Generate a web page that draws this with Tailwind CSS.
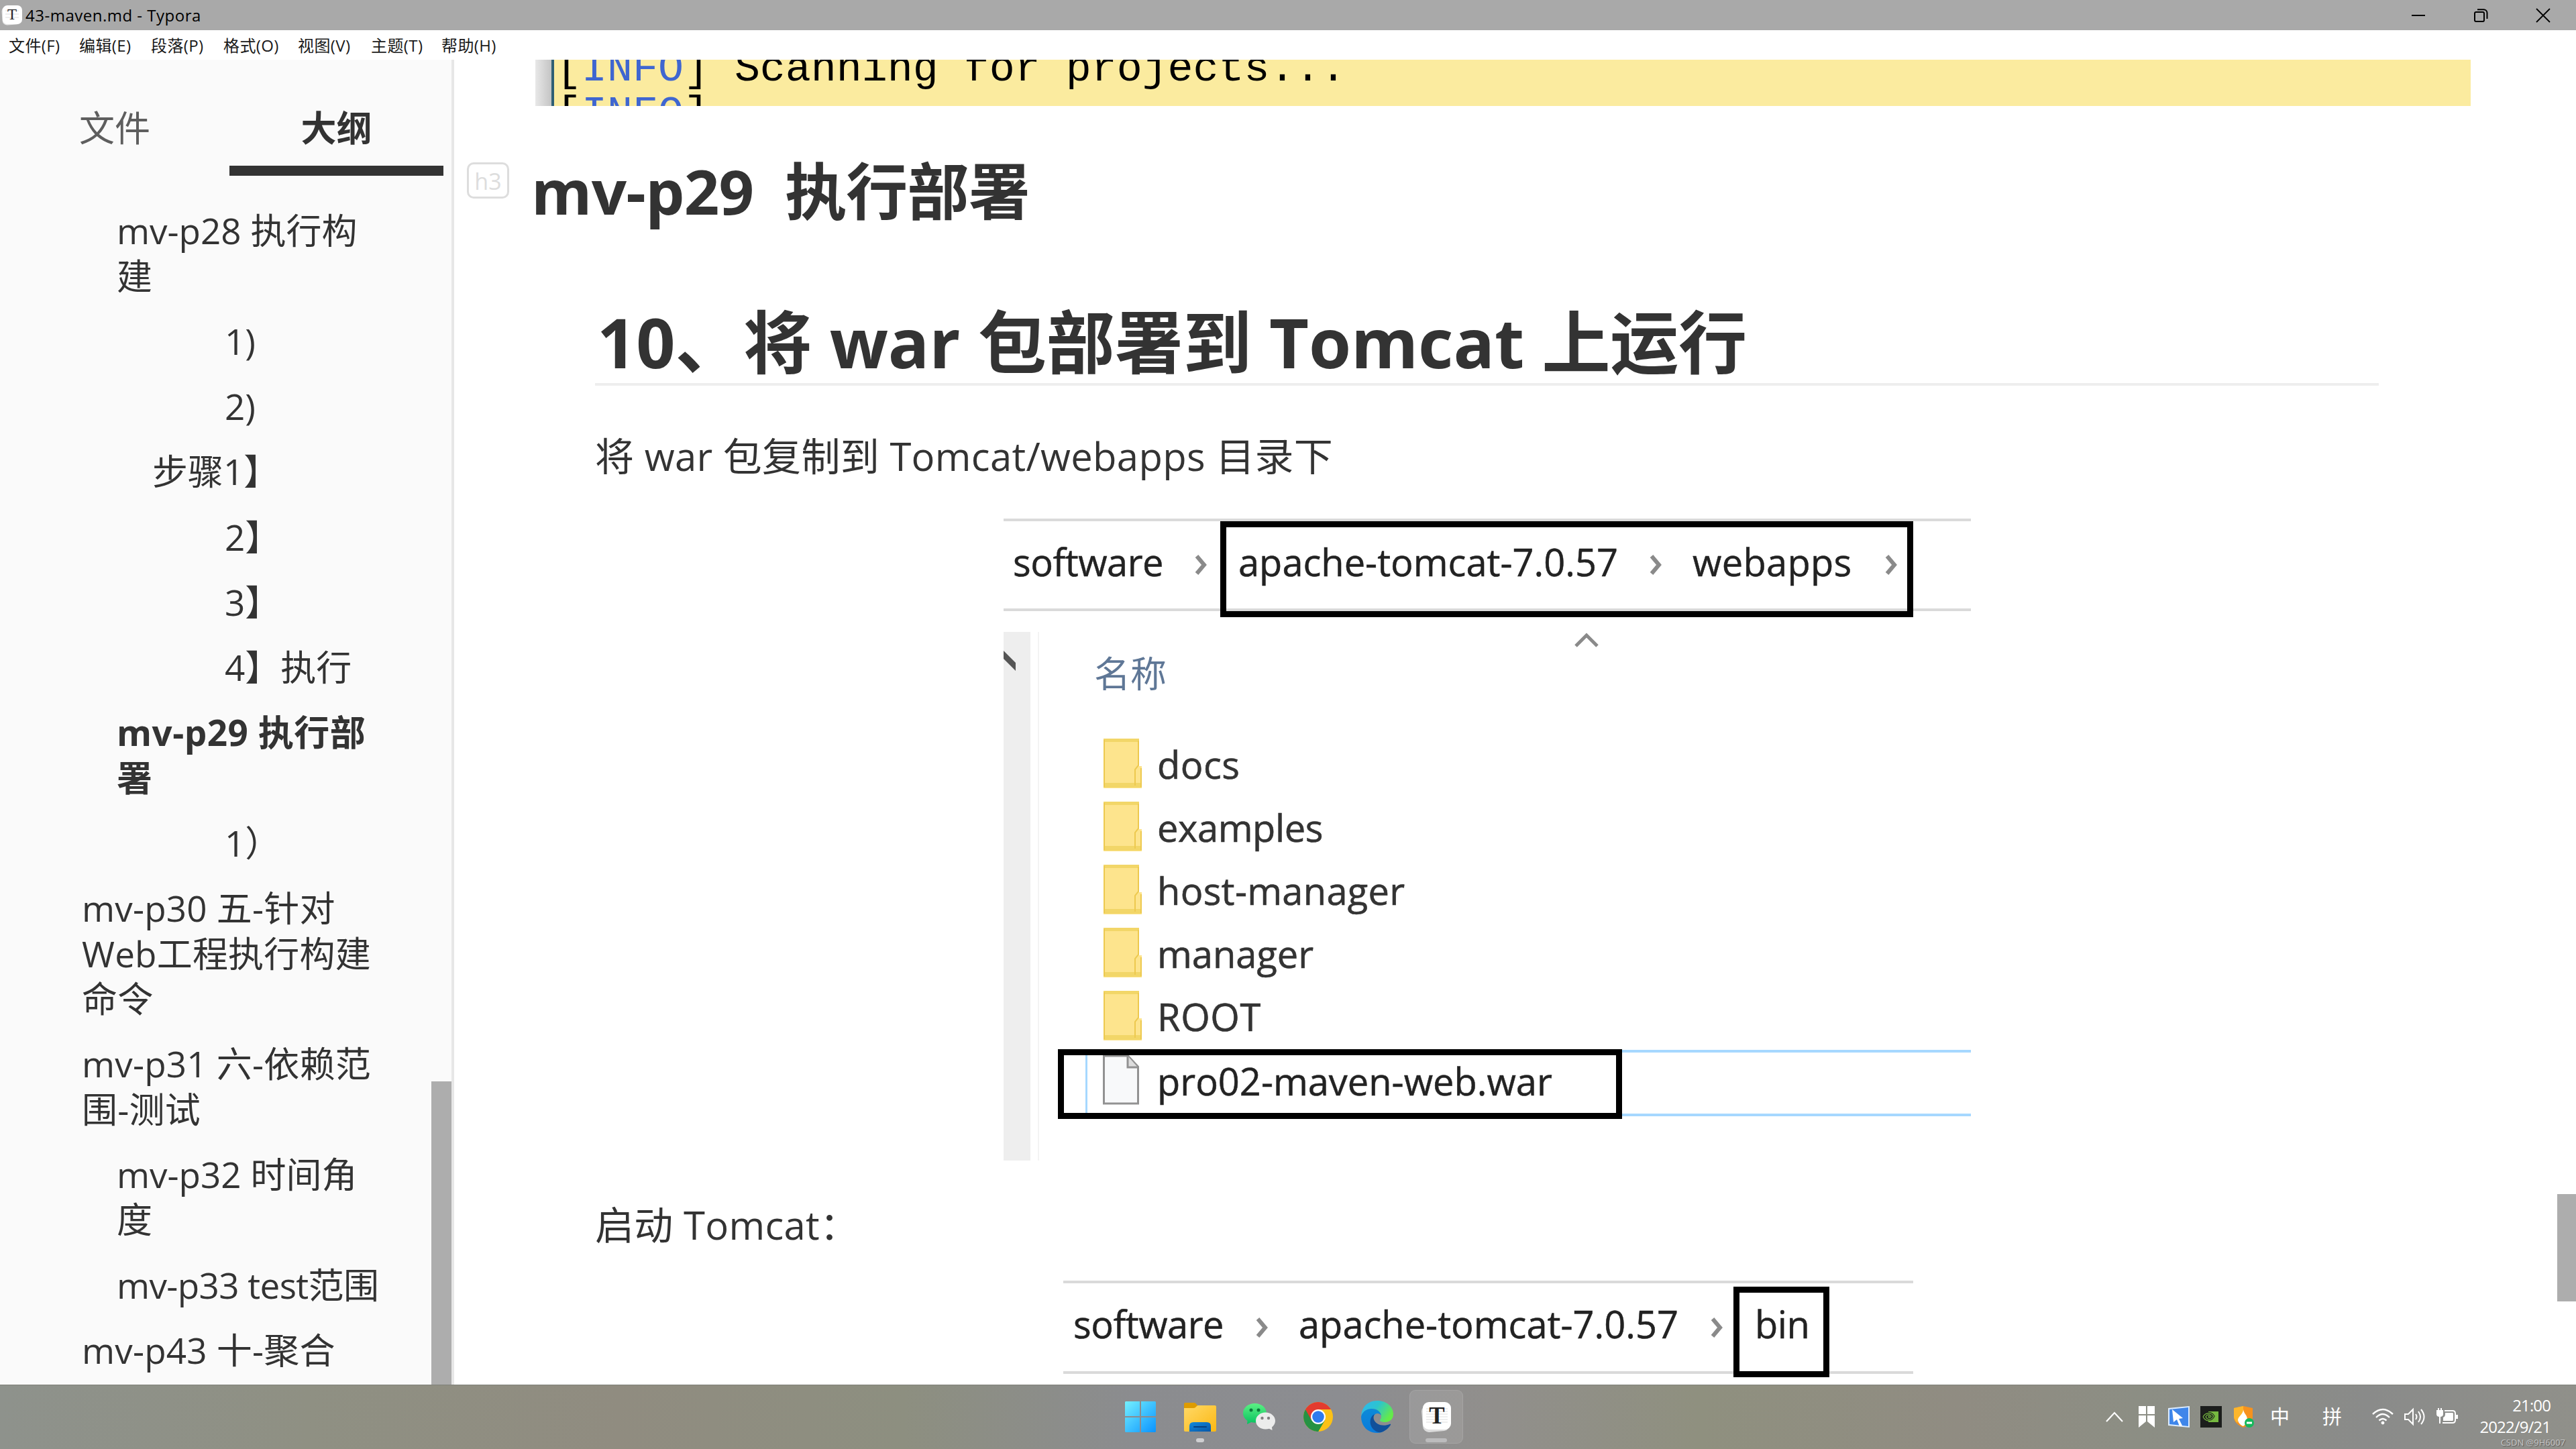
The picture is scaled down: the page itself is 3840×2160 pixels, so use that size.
<!DOCTYPE html>
<html lang="zh-CN">

<head>
  <meta charset="UTF-8" />
  <meta name="viewport" content="width=device-width, initial-scale=1.0" />
  <title>43-maven.md - Typora</title>
  <script src="https://cdn.jsdelivr.net/npm/@tailwindcss/browser@4"></script>
</head>

<body class="w-[3840px] h-[2160px] overflow-hidden flex flex-col bg-white text-[#333] font-['Open_Sans','Noto_Sans_CJK_SC',sans-serif]">

  <!-- Title bar -->
  <header class="h-[45px] shrink-0 bg-[#a9a9a9] text-black flex items-center">
    <svg class="w-[32px] h-[32px] ml-[2px]" viewBox="0 0 32 32">
      <rect x="1" y="2" width="27" height="28" rx="7" fill="#e4e4e4" transform="rotate(-4 16 16)" />
      <rect x="2" y="1" width="29" height="28" rx="7" fill="#fff" />
      <path d="M6 9h20M6 14h20M6 19h20" stroke="#ddd" />
      <text x="16" y="22" text-anchor="middle" font-family="Liberation Serif" font-size="23" fill="#222">T</text>
    </svg>
    <span class="ml-[4px] text-[24px] leading-[45px] tracking-[0.5px]">43-maven.md - Typora</span>
    <div class="ml-auto flex items-center pr-[37px] gap-[69px] h-[42px]">
      <svg class="w-[24px] h-[24px]" viewBox="0 0 24 24" fill="none" stroke="#000" stroke-width="2"><path d="M2 12h20" /></svg>
      <svg class="w-[24px] h-[24px]" viewBox="0 0 24 24" fill="none" stroke="#000" stroke-width="2">
        <rect x="3" y="7" width="14" height="14" rx="2" />
        <path d="M7 3.2h9.500a5 5 0 0 1 5 5V17" />
      </svg>
      <svg class="w-[24px] h-[24px]" viewBox="0 0 24 24" fill="none" stroke="#000" stroke-width="1.800"><path d="M2 2l20 20M22 2L2 22" /></svg>
    </div>
  </header>

  <!-- Menu bar -->
  <nav class="h-[44px] shrink-0 flex items-center pl-[13px] text-[24px] leading-[45px] tracking-[0.4px] text-[#1a1a1a]">
    <span class="w-[105px]">文件(F)</span>
    <span class="w-[107px]">编辑(E)</span>
    <span class="w-[108px]">段落(P)</span>
    <span class="w-[111px]">格式(O)</span>
    <span class="w-[109px]">视图(V)</span>
    <span class="w-[105px]">主题(T)</span>
    <span>帮助(H)</span>
  </nav>

  <div class="h-[1975px] shrink-0 flex overflow-hidden">

    <!-- Outline sidebar -->
    <aside class="relative w-[677px] shrink-0 bg-[#fafafa] border-r-4 border-[#e7e7e7] overflow-hidden text-[53px] leading-[67.5px]">
      <div class="flex h-[173px] text-center leading-[203px]">
        <div class="w-[342px] text-[#5e5e5e]">文件</div>
        <div class="w-[319px] font-bold border-b-[15px] border-[#333]">大纲</div>
      </div>
      <ul class="pt-[33.5px] pl-px">
        <li class="py-[14.85px] pl-[173px]">mv-p28 执行构<br />建</li>
        <li class="py-[14.85px] pl-[334px]">1)</li>
        <li class="py-[14.85px] pl-[334px]">2)</li>
        <li class="py-[14.85px] pl-[226px]">步骤1】</li>
        <li class="py-[14.85px] pl-[334px]">2】</li>
        <li class="py-[14.85px] pl-[334px]">3】</li>
        <li class="py-[14.85px] pl-[334px]">4】执行</li>
        <li class="py-[14.85px] pl-[173px] font-bold tracking-[0.5px]">mv-p29 执行部<br />署</li>
        <li class="py-[14.85px] pl-[334px]">1）</li>
        <li class="py-[14.85px] pl-[121px] tracking-[0.2px]">mv-p30 五-针对<br />Web工程执行构建<br />命令</li>
        <li class="py-[14.85px] pl-[121px] tracking-[0.2px]">mv-p31 六-依赖范<br />围-测试</li>
        <li class="py-[14.85px] pl-[173px]">mv-p32 时间角<br />度</li>
        <li class="py-[14.85px] pl-[173px] tracking-[-0.6px]">mv-p33 test范围</li>
        <li class="py-[14.85px] pl-[121px] tracking-[0.2px]">mv-p43 十-聚合</li>
      </ul>
      <div class="absolute right-0 bottom-0 w-[30px] h-[452px] bg-[#adadad]"></div>
    </aside>

    <!-- Document -->
    <main class="relative flex-1 overflow-hidden">
      <div class="ml-[121px] w-[2885px] h-[69px] flex overflow-hidden bg-[#fbeb9f] text-black font-['Liberation_Mono',monospace] text-[63.3px]">
        <div class="w-[24px] shrink-0 bg-gradient-to-r from-[#e8e8e8] to-[#c4c4c4]"></div>
        <div class="w-[4px] shrink-0 bg-[#2f5f74]"></div>
        <div class="pl-[3px] leading-[67px] -mt-[19px]">
          <p>[<span class="text-[#3f66d0]">INFO</span>] Scanning for projects...</p>
          <p>[<span class="text-[#3f66d0]">INFO</span>]</p>
        </div>
      </div>

      <div class="mt-[75px] pl-[19px] flex h-[100px]">
        <span class="mt-[9px] w-[63px] h-[54px] border-3 border-[#ddd] rounded-[10px] text-[#ddd] text-[34px] leading-[50px] text-center">h3</span>
        <h3 class="ml-[33px] text-[92px] leading-[103px] font-bold whitespace-pre tracking-[-0.7px]">mv-p29  执行部署</h3>
      </div>

      <h2 class="mt-[112px] ml-[210px] pl-[3px] w-[2659px] h-[130px] border-b-4 border-[#eee] text-[102px] leading-[129px] tracking-[-0.1px] font-bold">10、将 war 包部署到 Tomcat 上运行</h2>

      <p class="mt-[63px] ml-[210px] h-[80px] text-[58px] leading-[83px] tracking-[0.3px] text-[#333]">将 war 包复制到 Tomcat/webapps 目录下</p>

      <!-- Explorer: webapps -->
      <div class="relative mt-[55px] ml-[819px] w-[1442px]">
        <div class="h-[138px] border-y-4 border-[#dadada] pl-[14px] grid grid-cols-[270px_66px_612px_65px_286px_20px] text-[56px] leading-[120px] text-[#222] [-webkit-text-stroke:0.5px_#222]">
          <span class="tracking-[-0.5px]">software</span>
          <svg class="w-[20px] h-[30px] mt-[50px]" viewBox="0 0 20 30" fill="none" stroke="#8a8a8a" stroke-width="6"><path d="M4 2l11 13L4 28" /></svg>
          <span>apache-tomcat-7.0.57</span>
          <svg class="w-[20px] h-[30px] mt-[50px]" viewBox="0 0 20 30" fill="none" stroke="#8a8a8a" stroke-width="6"><path d="M4 2l11 13L4 28" /></svg>
          <span class="tracking-[0.3px]">webapps</span>
          <svg class="w-[20px] h-[30px] mt-[50px]" viewBox="0 0 20 30" fill="none" stroke="#8a8a8a" stroke-width="6"><path d="M4 2l11 13L4 28" /></svg>
        </div>
        <div class="absolute left-[323px] top-[4px] w-[1033px] h-[143px] border-[9px] border-black"></div>

        <div class="mt-[31px] h-[788px] flex">
          <div class="w-[40px] bg-[#eee]">
            <svg class="w-[18px] h-[30px] mt-[28px]" viewBox="0 0 18 30"><path d="M0 0l18 18v12L0 12z" fill="#555" /></svg>
          </div>
          <div class="relative ml-[11px] flex-1 border-l-2 border-[#f4f4f4]">
            <div class="h-[150px] flex">
              <span class="w-[714px] pl-[82px] text-[54px] leading-[124px] text-[#5f7796]">名称</span>
              <svg class="ml-[83px] w-[38px] h-[24px]" viewBox="0 0 38 24" fill="none" stroke="#8a8a8a" stroke-width="5"><path d="M3 21L19 5l16 16" /></svg>
            </div>
            <ul class="text-[56px] leading-[94px] text-[#333] [-webkit-text-stroke:0.6px_#333]">
              <li class="h-[94px] pl-[95px] flex tracking-[0.5px]">
                <svg class="w-[58px] h-[75px] mt-[8px] mr-[23px]" viewBox="0 0 58 75"><path d="M1 2h53v40h4v33H1z" fill="#fde48d" /><path d="M1 1h53v5H1zM1 67h57v7H1z" fill="#f2d668" /><path d="M2 3v70M53 4v37l-5 6v24M57 45v28" stroke="#edc94f" stroke-width="2" fill="none" /></svg>docs
              </li>
              <li class="h-[94px] pl-[95px] flex tracking-[-0.4px]">
                <svg class="w-[58px] h-[75px] mt-[8px] mr-[23px]" viewBox="0 0 58 75"><path d="M1 2h53v40h4v33H1z" fill="#fde48d" /><path d="M1 1h53v5H1zM1 67h57v7H1z" fill="#f2d668" /><path d="M2 3v70M53 4v37l-5 6v24M57 45v28" stroke="#edc94f" stroke-width="2" fill="none" /></svg>examples
              </li>
              <li class="h-[94px] pl-[95px] flex tracking-[0.3px]">
                <svg class="w-[58px] h-[75px] mt-[8px] mr-[23px]" viewBox="0 0 58 75"><path d="M1 2h53v40h4v33H1z" fill="#fde48d" /><path d="M1 1h53v5H1zM1 67h57v7H1z" fill="#f2d668" /><path d="M2 3v70M53 4v37l-5 6v24M57 45v28" stroke="#edc94f" stroke-width="2" fill="none" /></svg>host-manager
              </li>
              <li class="h-[94px] pl-[95px] flex">
                <svg class="w-[58px] h-[75px] mt-[8px] mr-[23px]" viewBox="0 0 58 75"><path d="M1 2h53v40h4v33H1z" fill="#fde48d" /><path d="M1 1h53v5H1zM1 67h57v7H1z" fill="#f2d668" /><path d="M2 3v70M53 4v37l-5 6v24M57 45v28" stroke="#edc94f" stroke-width="2" fill="none" /></svg>manager
              </li>
              <li class="h-[94px] pl-[95px] flex tracking-[0.6px]">
                <svg class="w-[58px] h-[75px] mt-[8px] mr-[23px]" viewBox="0 0 58 75"><path d="M1 2h53v40h4v33H1z" fill="#fde48d" /><path d="M1 1h53v5H1zM1 67h57v7H1z" fill="#f2d668" /><path d="M2 3v70M53 4v37l-5 6v24M57 45v28" stroke="#edc94f" stroke-width="2" fill="none" /></svg>ROOT
              </li>
              <li class="mt-[3px] ml-[69px] h-[99px] border-y-4 border-l-3 border-[#a6d8ff] pl-[23px] flex leading-[85px] text-[#222]">
                <svg class="w-[54px] h-[75px] mt-[3px] mr-[27px]" viewBox="0 0 54 75"><path d="M1.500 2h36l15 16v55h-51z" fill="#f8f9fa" stroke="#929292" stroke-width="3" /><path d="M37 2v17h15" fill="#ddd" stroke="#929292" stroke-width="3" /></svg>pro02-maven-web.war
              </li>
            </ul>
            <div class="absolute left-[28px] top-[622px] w-[841px] h-[104px] border-[9px] border-black"></div>
          </div>
        </div>
      </div>

      <p class="mt-[54px] ml-[210px] h-[80px] text-[58px] leading-[83px] tracking-[0.3px] text-[#333]">启动 Tomcat：</p>

      <!-- Explorer: bin -->
      <div class="relative mt-[45px] ml-[908px] w-[1267px]">
        <div class="h-[139px] border-y-4 border-[#dadada] pl-[14px] grid grid-cols-[272px_65px_613px_67px_auto] text-[56px] leading-[121px] text-[#222] [-webkit-text-stroke:0.5px_#222]">
          <span class="tracking-[-0.5px] pl-px">software</span>
          <svg class="w-[20px] h-[30px] mt-[51px]" viewBox="0 0 20 30" fill="none" stroke="#8a8a8a" stroke-width="6"><path d="M4 2l11 13L4 28" /></svg>
          <span>apache-tomcat-7.0.57</span>
          <svg class="w-[20px] h-[30px] mt-[51px]" viewBox="0 0 20 30" fill="none" stroke="#8a8a8a" stroke-width="6"><path d="M4 2l11 13L4 28" /></svg>
          <span class="tracking-[-0.5px]">bin</span>
        </div>
        <div class="absolute left-[999px] top-[9px] w-[143px] h-[135px] border-[9px] border-black"></div>
      </div>

      <div class="absolute right-0 top-[1691px] w-[28px] h-[160px] bg-[#adadad]"></div>
    </main>
  </div>

  <!-- Taskbar -->
  <footer class="relative h-[96px] shrink-0 flex items-center border-t border-[#7f8078] text-white bg-linear-[90deg,#8e928c_0%,#8f9083_12%,#908c80_24%,#8d8f80_35%,#8b8c8f_44%,#8c8d91_52%,#918f8c_58%,#8f907f_66%,#908c82_76%,#8c8e84_83%,#8a8b8a_92%,#90908a_100%]">
    <div class="ml-[1656px] -mt-px flex items-center">
      <div class="w-[88px] h-[80px] flex items-center justify-center">
        <svg class="w-[46px] h-[46px]" viewBox="0 0 46 46">
          <defs><linearGradient id="win" x1="0" y1="0" x2="1" y2="1"><stop offset="0" stop-color="#74f0ff" /><stop offset="1" stop-color="#0a93ff" /></linearGradient></defs>
          <path d="M1 0h21v22H0V1zM24 0h21l1 1v21H24zM0 24h22v22H1l-1-1zM24 24h22v21l-1 1H24z" fill="url(#win)" />
        </svg>
      </div>
      <div class="relative w-[88px] h-[80px] pl-[2px] flex items-center justify-center">
        <svg class="w-[48px] h-[44px]" viewBox="0 0 48 44">
          <defs>
            <linearGradient id="fold" x1="0" y1="0" x2="1" y2="1"><stop offset="0" stop-color="#ffd968" /><stop offset="1" stop-color="#fbb813" /></linearGradient>
            <linearGradient id="tray" x1="0" y1="0" x2="1" y2="1"><stop offset="0" stop-color="#1289dc" /><stop offset="1" stop-color="#0757a8" /></linearGradient>
          </defs>
          <path d="M0 3q0-2 2-2h13q2 0 3 1.500L20 5v9H0z" fill="#dd9b00" />
          <path d="M0 9h14q2 0 3-1l2-2q1-1 2-1h25q2 0 2 2v35q0 2-2 2H2q-2 0-2-2z" fill="url(#fold)" />
          <path d="M8 44V36q0-6 6-6h20q6 0 6 6v8z" fill="url(#tray)" />
          <path d="M15 37h18" stroke="#063f80" stroke-width="2" stroke-linecap="round" />
        </svg>
        <span class="absolute bottom-0 w-[12px] h-[6px] mb-[2px] rounded-full bg-[#cfcfd1]"></span>
      </div>
      <div class="w-[88px] h-[80px] pl-px flex items-center justify-center">
        <svg class="w-[48px] h-[42px]" viewBox="0 0 48 42">
          <defs><linearGradient id="wx" x1="0" y1="0" x2="0" y2="1"><stop offset="0" stop-color="#5cf183" /><stop offset="1" stop-color="#07c160" /></linearGradient></defs>
          <path d="M17.500 1C7.500 1 0 7.500 0 15.500c0 5 2.500 8.500 6.500 11.500L6 32l6-3q3 .7 6 .7c10 0 17-6.500 17-14.200S27.500 1 17.500 1z" fill="url(#wx)" />
          <circle cx="12" cy="11" r="2.500" fill="#0b7a3b" /><circle cx="23" cy="11" r="2.500" fill="#0b7a3b" />
          <path d="M33.500 14.500C25.500 14.500 19 20 19 27s6.500 12.500 14.500 12.500q3 0 5.500-.8l4.500 2.300-.5-4.500c3-2.500 5-5.500 5-9.500 0-7-6.500-12.500-14.500-12.500z" fill="#ececec" />
          <circle cx="28.500" cy="23" r="2.200" fill="#808080" /><circle cx="38" cy="23" r="2.200" fill="#808080" />
        </svg>
      </div>
      <div class="w-[88px] h-[80px] pl-px flex items-center justify-center">
        <svg class="w-[44px] h-[44px]" viewBox="0 0 44 44">
          <circle cx="22" cy="22" r="22" fill="#fbc116" />
          <path d="M22 22L3 11A22 22 0 0 0 22 44l10-17z" fill="#269244" />
          <path d="M3 11A22 22 0 0 1 41 11H22L12 27z" fill="#e33b2e" />
          <path d="M12.500 27.500A11 11 0 0 0 31.500 27.500L22 44h-2z" fill="#269244" />
          <circle cx="22" cy="22" r="11" fill="#fff" /><circle cx="22" cy="22" r="8.800" fill="#2f7bee" />
        </svg>
      </div>
      <div class="w-[88px] h-[80px] pl-px flex items-center justify-center">
        <svg class="w-[48px] h-[48px]" viewBox="0 0 48 48">
          <defs>
            <linearGradient id="edgeTop" x1="0" y1="0" x2="1" y2=".5"><stop offset="0" stop-color="#2fb5f2" /><stop offset=".5" stop-color="#2cc4cf" /><stop offset="1" stop-color="#64ea4a" /></linearGradient>
            <linearGradient id="edgeL" x1="0" y1="0" x2="0" y2="1"><stop offset="0" stop-color="#0c8ad9" /><stop offset="1" stop-color="#0a7bdb" /></linearGradient>
          </defs>
          <path d="M0 24C0 10 10 0 24 0s24 9 24 20c0 8-6 12-12 12-5 0-8-1-8-3 0-1 2-2 2-5 0-7-6-12-13-12C8 12 1 17 0 24z" fill="url(#edgeTop)" />
          <path d="M0 24C1 17 8 12 16 12c7 0 13 4 14 10-2-3-6-4-9-2-3 3-4 7-2 13 2 7 9 11 16 11-3 3-7 4-11 4C10 48 0 38 0 24z" fill="url(#edgeL)" />
          <path d="M20 20c-6 3-8 11-5 18 3 6 9 10 15 9 6-2 11-6 14-11 .5-1-.5-1.500-1.500-1C33 39 22 36 19 28c-1-3-.5-6 1-8z" fill="#11509a" />
        </svg>
      </div>
      <div class="relative ml-[5px] w-[80px] h-[80px] flex items-center justify-center rounded-[9px] bg-white/10 border border-white/10">
        <svg class="w-[46px] h-[46px]" viewBox="0 0 46 46">
          <rect x="2" y="5" width="40" height="40" rx="9" fill="#dcdcdc" transform="rotate(-5 22 25)" />
          <rect x="3" y="1" width="42" height="41" rx="9" fill="#fff" />
          <path d="M8 11h32M8 15h32M8 19h32M8 23h32M8 27h32M8 31h32" stroke="#ddd" />
          <text x="24" y="33" text-anchor="middle" font-family="Liberation Serif" font-weight="bold" font-size="35" fill="#222">T</text>
        </svg>
        <span class="absolute bottom-[1px] w-[32px] h-[6px] rounded-full bg-[#bcbcbd]"></span>
      </div>
    </div>

    <!-- Tray -->
    <div class="absolute left-[3138px] -top-px h-[95px] flex items-center text-[29px] leading-[93px]">
      <svg class="w-[28px] h-[18px]" viewBox="0 0 28 18" fill="none" stroke="#fff" stroke-width="2.200"><path d="M2 16L14 3l12 13" /></svg>
      <svg class="ml-[22px] w-[24px] h-[32px]" viewBox="0 0 24 32" fill="#fff"><path d="M0 0h11v12H0zM13 0h11v12H13zM0 14h11v9L0 32zM13 14h11v18l-11-9z" /></svg>
      <svg class="ml-[20px] w-[32px] h-[32px]" viewBox="0 0 32 32"><path d="M0 3L32 0v32L0 29z" fill="#dcecff" /><path d="M2 5l28-3v28L2 27z" fill="#3f86ea" /><path d="M6 5l16 13-6 1 5 10-4 1-4-10-5 4z" fill="#fff" /></svg>
      <svg class="ml-[16px] w-[32px] h-[32px]" viewBox="0 0 32 32"><path d="M0 0h32v32H0z" fill="#1c1e1c" /><path d="M12 8h15v16H12z" fill="#76b940" /><path d="M4 16c4-7 12-7 16-1-3 6-9 7-12 1 2-4 6-4 8-1-1 3-4 3-4 1" fill="none" stroke="#1c1e1c" stroke-width="3" /><path d="M4 16c4-7 12-7 16-1-3 6-9 7-12 1 2-4 6-4 8-1-1 3-4 3-4 1M4 16c2 4 5 6 9 6" fill="none" stroke="#76b940" stroke-width="1.200" /></svg>
      <svg class="ml-[17px] w-[32px] h-[32px]" viewBox="0 0 32 32"><path d="M1 3l14-3 14 3v13q0 10-14 16Q1 26 1 16z" fill="#f6921e" /><path d="M1 3l14-3v8L6 25Q1 20 1 16z" fill="#fdb62b" /><path d="M15 5c1 7 6 8 6 15 0 4-2 7-6 10-5-2-8-6-8-10 1-5 8-8 8-15z" fill="#fff" /><circle cx="24" cy="25" r="7" fill="#15b85a" /><path d="M20 25h8" stroke="#fff" stroke-width="3" /></svg>
      <span class="ml-[23px] w-[78px]">中</span>
      <span class="w-[73px]">拼</span>
      <svg class="w-[34px] h-[28px]" viewBox="0 0 34 28" fill="none" stroke="#fff" stroke-width="2.400"><path d="M2 10q15-14 30 0M7 15q10-10 20 0M11.500 19.500q5.500-5 11 0" /><circle cx="17" cy="23" r="2" fill="#fff" stroke-width="1" /></svg>
      <svg class="ml-[14px] w-[34px] h-[28px]" viewBox="0 0 34 28" fill="none" stroke="#fff" stroke-width="2"><path d="M2 10h5l7-7v22l-7-7H2zM18 10q3 4 0 8M22 6q6 8 0 16M26 3q9 11 0 22" /></svg>
      <svg class="ml-[14px] w-[34px] h-[28px]" viewBox="0 0 34 28" fill="none" stroke="#fff" stroke-width="2"><path d="M13 5h12q4 0 4 4v10q0 4-4 4H10" /><path d="M14 8h11l1 1v10l-1 1H11v-5q3-1 3-5z" fill="#fff" stroke="none" /><path d="M31.500 11v6" stroke-width="3" /><path d="M2 5h8v5q0 3-4 3t-4-3z" fill="#fff" /><path d="M4 1v4M8 1v4M6 13v11" /></svg>
    </div>
    <div class="absolute right-[38px] top-[14px] text-right text-[24px] leading-[32px] tracking-[-0.9px]">
      <p>21:00</p>
      <p>2022/9/21</p>
    </div>
    <span class="absolute right-[16px] bottom-[3px] text-[13px] leading-[14px] text-[#c9c9c9] [text-shadow:1px_1px_1px_#555]">CSDN @9H6007</span>
  </footer>
</body>

</html>
